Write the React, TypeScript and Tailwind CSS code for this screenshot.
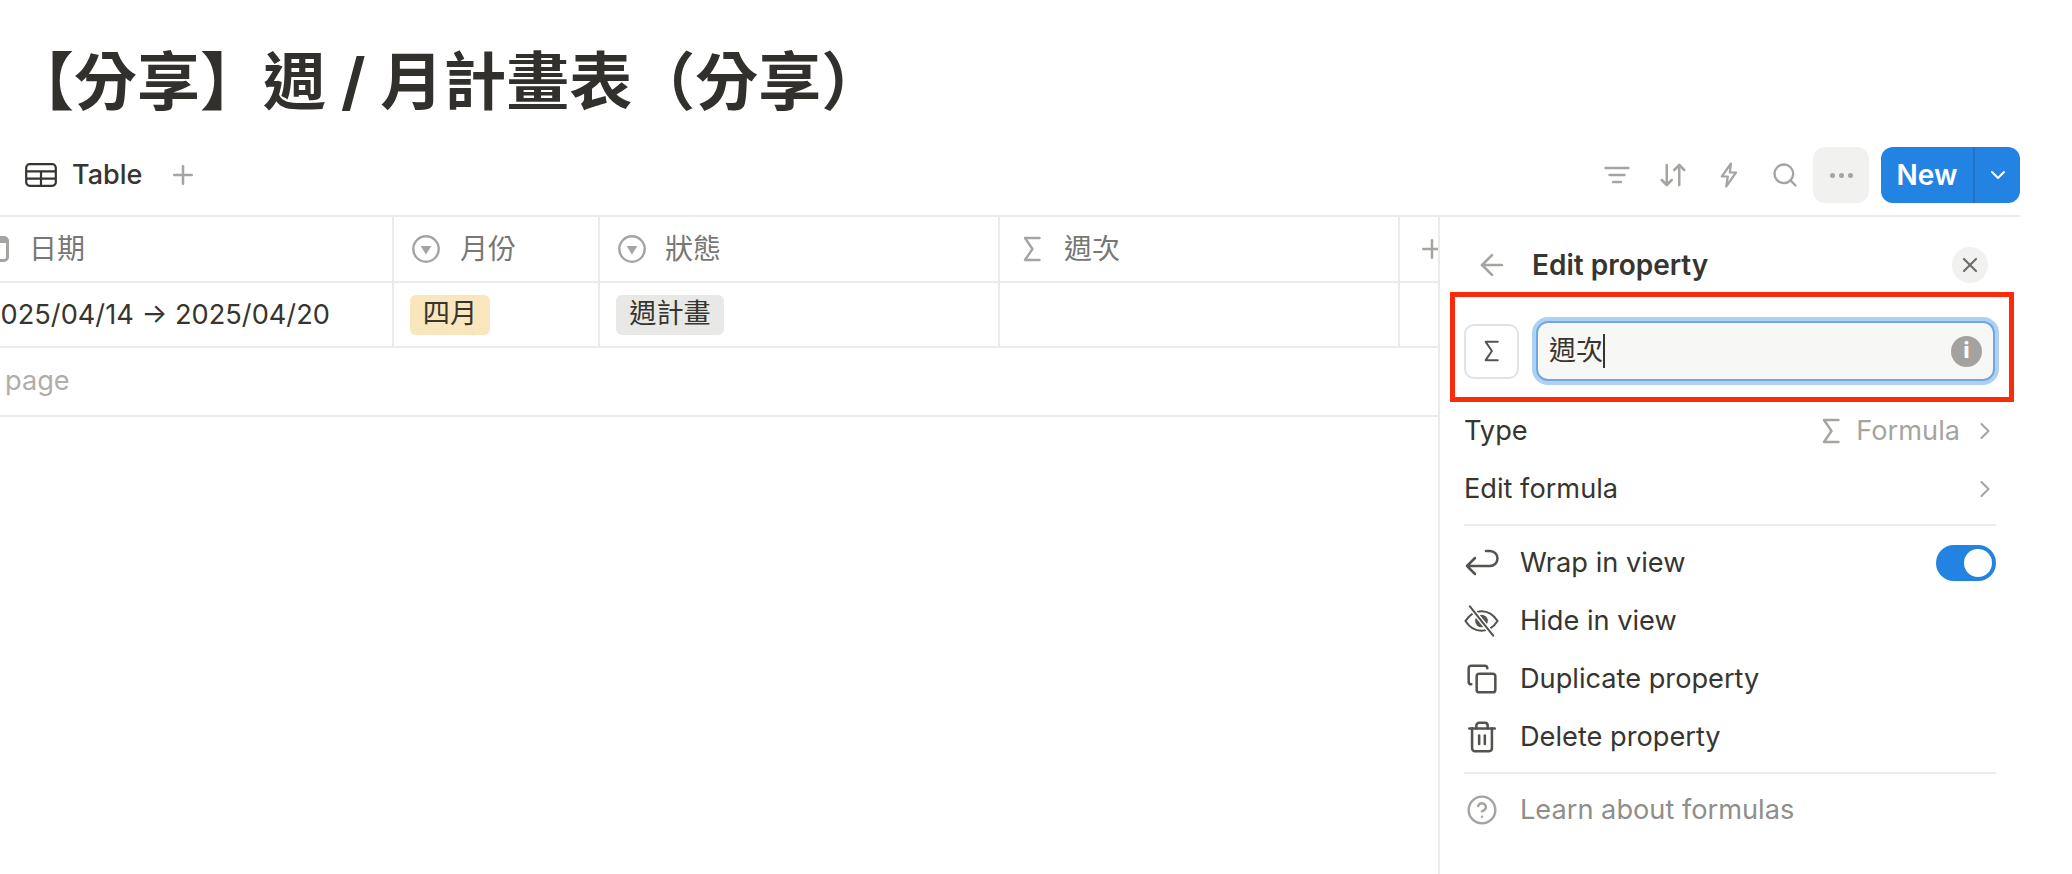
import { ArrowDownUp, ArrowLeft, ChevronDown, ChevronRight, CircleHelp, Copy, Plus, Search, Trash2, X } from "lucide-react";

function TableIcon() {
  return (
    <svg width="32" height="24" viewBox="0 0 32 24" fill="none" stroke="#37352f" strokeWidth="2.2" className="shrink-0">
      <rect x="1.2" y="1.2" width="29.6" height="21.6" rx="3.5" />
      <path d="M1.2 8.4h29.6M1.2 15.6h29.6M16 8.4v14.4" />
    </svg>
  );
}

function SelectIcon() {
  return (
    <svg width="28" height="28" viewBox="0 0 28 28" fill="none" className="shrink-0">
      <circle cx="14" cy="14" r="12.7" stroke="#a5a4a0" strokeWidth="2.4" />
      <path d="M8.6 11h10.8L14 19.4z" fill="#a5a4a0" />
    </svg>
  );
}

function SigmaIcon({ color, small, className }: { color: string; small?: boolean; className?: string }) {
  return (
    <svg width={small ? 15 : 18} height={small ? 22 : 26} viewBox="0 0 18 26" fill="none" stroke={color} strokeWidth="2.4" strokeLinejoin="round" strokeLinecap="round" className={`shrink-0 ${className ?? ""}`}>
      <path d="M16.5 2H2l7.5 11L2 24h14.5" />
    </svg>
  );
}

function FilterIcon() {
  return (
    <svg width="26" height="18" viewBox="0 0 26 18" stroke="#a5a4a0" strokeWidth="2.4" strokeLinecap="round">
      <path d="M1.5 2h23M5.5 9h15M9 16h8" />
    </svg>
  );
}

function BoltIcon() {
  return (
    <svg width="18" height="26" viewBox="0 0 18 26" fill="none" stroke="#a5a4a0" strokeWidth="2.2" strokeLinejoin="round" className="ml-[32px]">
      <path d="M11 1.5 1.8 14.5h6l-1.6 10 9.8-14h-6.2z" />
    </svg>
  );
}

function WrapIcon() {
  return (
    <svg width="34" height="28" viewBox="0 0 34 28" fill="none" stroke="#55534e" strokeWidth="2.5" strokeLinecap="round" strokeLinejoin="round">
      <path d="M2 17h23a7.500 7.500 0 0 0 0-15h-4M10 9l-8 8 8 8" />
    </svg>
  );
}

function HideIcon() {
  return (
    <svg width="36" height="34" viewBox="0 0 36 34" fill="none" stroke="#55534e" strokeWidth="2.1" strokeLinecap="round">
      <path d="M1.500 17C6 10 11.500 7 18 7s12 3 16.500 10C30 24 24.500 27 18 27S6 24 1.500 17z" />
      <circle cx="18" cy="17" r="6.500" fill="#55534e" stroke="none" />
      <path d="M6 2l24 30" stroke="#ffffff" strokeWidth="5" />
      <path d="M6 2l24 30" />
    </svg>
  );
}

function InfoIcon() {
  return (
    <div className="flex h-[31px] w-[31px] items-center justify-center rounded-full bg-[#a3a29e] text-[21px] font-extrabold text-white">
      i
    </div>
  );
}

function Cell({ width, children }: { width: string; children: React.ReactNode }) {
  return <div className={`flex h-full shrink-0 items-center border-r-2 border-[#ebebe9] ${width}`}>{children}</div>;
}

function MenuRow({ icon, label, muted, right }: { icon?: React.ReactNode; label: string; muted?: boolean; right?: React.ReactNode }) {
  return (
    <div className={`flex h-[58px] items-center ${muted ? "text-[#8f8e8a]" : "text-[#37352f]"}`}>
      {icon && <div className="mr-[21px] flex w-[35px] shrink-0 justify-center">{icon}</div>}
      <span className="text-[27.2px]">{label}</span>
      <div className="ml-auto flex items-center">{right}</div>
    </div>
  );
}

export default function App() {
  return (
    <div className="h-[874px] w-[2072px] overflow-hidden bg-white pr-[52px] font-['Inter','Noto_Sans_CJK_TC',sans-serif] text-[#37352f]">
      <h1 className="h-[146px] whitespace-nowrap pl-[11px] pt-[42px] text-[63px] font-bold leading-[78px] text-[#32302c]">【分享】週 / 月計畫表（分享）</h1>

      <div className="flex h-[69px] items-center pb-[11px]">
        <div className="ml-[25px] flex items-center">
          <TableIcon />
          <span className="ml-[15px] text-[27px] font-medium">Table</span>
          <Plus size={30} strokeWidth={2} className="ml-[26px] text-[#a5a4a0]" />
        </div>
        <div className="ml-auto flex items-center">
          <FilterIcon />
          <ArrowDownUp size={30} strokeWidth={2} className="ml-[28px] text-[#a5a4a0]" />
          <BoltIcon />
          <Search size={28} strokeWidth={2} className="ml-[33px] text-[#a5a4a0]" />
          <div className="ml-[14px] flex h-[56px] w-[56px] items-center justify-center gap-[4px] rounded-[12px] bg-[#f1f1ef]">
            <span className="h-[5px] w-[5px] rounded-full bg-[#a5a4a0]" />
            <span className="h-[5px] w-[5px] rounded-full bg-[#a5a4a0]" />
            <span className="h-[5px] w-[5px] rounded-full bg-[#a5a4a0]" />
          </div>
          <div className="ml-[12px] flex h-[56px] w-[139px] overflow-hidden rounded-[12px] bg-[#2383e2] text-white">
            <div className="flex w-[92px] items-center justify-center text-[28px] font-semibold">New</div>
            <div className="flex flex-1 items-center justify-center border-l-2 border-[#1f74c9]">
              <ChevronDown size={24} strokeWidth={2} />
            </div>
          </div>
        </div>
      </div>

      <div className="flex border-t-2 border-[#ebebe9]">
        <div className="w-[1438px] shrink-0 overflow-hidden">
          <div className="flex h-[66px] w-[1500px] items-center border-b-2 border-[#ebebe9] text-[28px] text-[#787774]">
            <Cell width="w-[394px]">
              <div className="ml-[-19px] mr-[20px] h-[26px] w-[28px] shrink-0 rounded-[5px] border-[3px] border-t-[7px] border-[#a5a4a0]" />
              <span>日期</span>
            </Cell>
            <Cell width="w-[206px]">
              <div className="ml-[18px] mr-[20px]"><SelectIcon /></div>
              <span>月份</span>
            </Cell>
            <Cell width="w-[400px]">
              <div className="ml-[18px] mr-[19px]"><SelectIcon /></div>
              <span>狀態</span>
            </Cell>
            <Cell width="w-[400px]">
              <SigmaIcon color="#a5a4a0" className="ml-[23px] mr-[23px]" />
              <span>週次</span>
            </Cell>
            <Plus size={30} strokeWidth={2} className="ml-[17px] text-[#a5a4a0]" />
          </div>

          <div className="flex h-[65px] w-[1500px] items-center border-b-2 border-[#ebebe9] text-[27.2px]">
            <Cell width="w-[394px]">
              <span className="ml-[-16px] mt-[2px] whitespace-nowrap">2025/04/14 → 2025/04/20</span>
            </Cell>
            <Cell width="w-[206px]">
              <span className="ml-[16px] flex h-[40px] w-[80px] items-center justify-center rounded-[6px] bg-[#f9e6bd]">四月</span>
            </Cell>
            <Cell width="w-[400px]">
              <span className="ml-[16px] flex h-[40px] w-[108px] items-center justify-center rounded-[6px] bg-[#e8e9e7]">週計畫</span>
            </Cell>
            <Cell width="w-[400px]">{null}</Cell>
          </div>

          <div className="flex h-[69px] items-center border-b-2 border-[#ebebe9] pl-[5px] text-[27.2px] text-[#b0aeaa]">page</div>
        </div>

        <div className="h-[660px] flex-1 border-l-2 border-[#ebebe9] pl-[24px] pr-[24px] pt-[30px]">
          <div className="flex h-[36px] items-center">
            <ArrowLeft size={34} strokeWidth={1.9} className="ml-[11px] text-[#a5a4a0]" />
            <span className="ml-[23px] text-[28px] font-semibold">Edit property</span>
            <div className="ml-auto mr-[8px] flex h-[36px] w-[36px] items-center justify-center rounded-full bg-[#f1f1ef]">
              <X size={24} strokeWidth={2.2} className="text-[#6f6e69]" />
            </div>
          </div>

          <div className="ml-[-14px] mr-[-18px] mt-[9px] flex h-[110px] items-center border-[5px] border-[#fb2a0a] pl-[9px] pr-[14px] pt-[8px]">
            <div className="flex h-[55px] w-[55px] shrink-0 items-center justify-center rounded-[10px] border-2 border-[#e3e2e0]">
              <SigmaIcon color="#55534e" small />
            </div>
            <div className="ml-[17px] flex h-[60px] flex-1 items-center rounded-[12px] border-2 border-[#6ea8e4] bg-[#f7f7f5] pl-[11px] pr-[11px] shadow-[0_0_0_4px_#afd0f2]">
              <span className="text-[27px]">週次</span>
              <span className="h-[34px] w-[2px] bg-[#37352f]" />
              <div className="ml-auto"><InfoIcon /></div>
            </div>
          </div>

          <MenuRow
            label="Type"
            right={
              <>
                <SigmaIcon color="#a5a4a0" />
                <span className="ml-[16px] text-[27.2px] text-[#a5a4a0]">Formula</span>
                <ChevronRight size={28} strokeWidth={1.8} className="ml-[11px] mr-[-3px] text-[#a5a4a0]" />
              </>
            }
          />
          <MenuRow label="Edit formula" right={<ChevronRight size={28} strokeWidth={1.8} className="mr-[-3px] text-[#a5a4a0]" />} />
          <div className="mb-[8px] mt-[6px] h-[2px] bg-[#ebebe9]" />
          <MenuRow
            icon={<WrapIcon />}
            label="Wrap in view"
            right={
              <div className="flex h-[36px] w-[60px] items-center justify-end rounded-full bg-[#2383e2] pr-[4px]">
                <div className="h-[28px] w-[28px] rounded-full bg-white" />
              </div>
            }
          />
          <MenuRow icon={<HideIcon />} label="Hide in view" />
          <MenuRow icon={<Copy size={32} strokeWidth={1.9} className="text-[#55534e]" />} label="Duplicate property" />
          <MenuRow icon={<Trash2 size={34} strokeWidth={1.8} className="text-[#55534e]" />} label="Delete property" />
          <div className="mb-[7px] mt-[6px] h-[2px] bg-[#ebebe9]" />
          <MenuRow icon={<CircleHelp size={32} strokeWidth={1.8} className="text-[#a5a4a0]" />} label="Learn about formulas" muted />
        </div>
      </div>
    </div>
  );
}
